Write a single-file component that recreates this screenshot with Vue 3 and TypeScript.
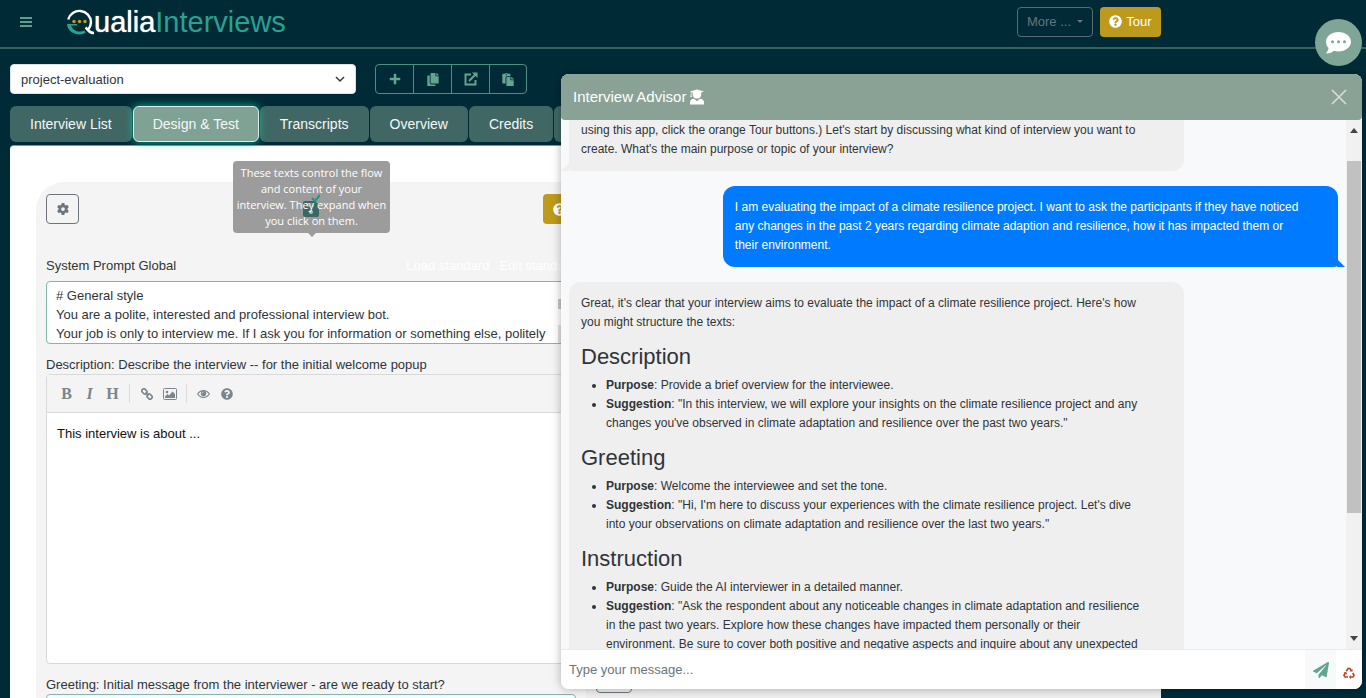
<script setup lang="ts">
import { ref } from 'vue'

interface Section {
  title: string
  purpose: string
  suggestion: string
}

const project = ref('project-evaluation')
const tabs: string[] = ['Interview List', 'Design & Test', 'Transcripts', 'Overview', 'Credits', '']
const activeTab = ref('Design & Test')
const systemPrompt = ref(
  '# General style\nYou are a polite, interested and professional interview bot.\nYour job is only to interview me. If I ask you for information or something else, politely',
)
const description = ref('This interview is about ...')
const greeting = ref('')
const message = ref('')

const sections: Section[] = [
  {
    title: 'Description',
    purpose: 'Provide a brief overview for the interviewee.',
    suggestion:
      '"In this interview, we will explore your insights on the climate resilience project and any changes you\'ve observed in climate adaptation and resilience over the past two years."',
  },
  {
    title: 'Greeting',
    purpose: 'Welcome the interviewee and set the tone.',
    suggestion:
      '"Hi, I\'m here to discuss your experiences with the climate resilience project. Let\'s dive into your observations on climate adaptation and resilience over the last two years."',
  },
  {
    title: 'Instruction',
    purpose: 'Guide the AI interviewer in a detailed manner.',
    suggestion:
      '"Ask the respondent about any noticeable changes in climate adaptation and resilience in the past two years. Explore how these changes have impacted them personally or their environment. Be sure to cover both positive and negative aspects and inquire about any unexpected',
  },
]

const questionPath =
  'M504 256c0 136.997-111.043 248-248 248S8 392.997 8 256C8 119.083 119.043 8 256 8s248 111.083 248 248zM262.655 90c-54.497 0-89.255 22.957-116.549 63.758-3.536 5.286-2.353 12.415 2.715 16.258l34.699 26.31c5.205 3.947 12.621 3.008 16.665-2.122 17.864-22.658 30.113-35.797 57.303-35.797 20.429 0 45.698 13.148 45.698 32.958 0 14.976-12.363 22.667-32.534 33.976C247.128 238.528 216 254.941 216 296v4c0 6.627 5.373 12 12 12h56c6.627 0 12-5.373 12-12v-1.333c0-28.462 83.186-29.647 83.186-106.667 0-58.002-60.165-102-116.531-102zM256 338c-25.365 0-46 20.635-46 46 0 25.364 20.635 46 46 46s46-20.636 46-46c0-25.365-20.635-46-46-46z'
const gearPath =
  'M495.9 166.6c3.2 8.7 .5 18.4-6.4 24.6l-43.3 39.4c1.1 8.3 1.7 16.8 1.7 25.4s-.6 17.1-1.7 25.4l43.3 39.4c6.9 6.2 9.6 15.9 6.4 24.6c-4.4 11.9-9.7 23.3-15.8 34.3l-4.7 8.1c-6.6 11-14 21.4-22.1 31.2c-5.9 7.2-15.7 9.6-24.5 6.8l-55.7-17.7c-13.4 10.3-28.2 18.9-44 25.4l-12.5 57.1c-2 9.1-9 16.3-18.2 17.8c-13.8 2.3-28 3.5-42.5 3.5s-28.7-1.2-42.5-3.5c-9.2-1.5-16.2-8.7-18.2-17.8l-12.5-57.1c-15.8-6.5-30.6-15.1-44-25.4L83.1 425.9c-8.8 2.8-18.6 .3-24.5-6.8c-8.1-9.8-15.5-20.2-22.1-31.2l-4.7-8.1c-6.1-11-11.4-22.4-15.8-34.3c-3.2-8.7-.5-18.4 6.4-24.6l43.3-39.4C64.6 273.1 64 264.6 64 256s.6-17.1 1.7-25.4L22.4 191.2c-6.9-6.2-9.6-15.9-6.4-24.6c4.4-11.9 9.7-23.3 15.8-34.3l4.7-8.1c6.6-11 14-21.4 22.1-31.2c5.9-7.2 15.7-9.6 24.5-6.8l55.7 17.7c13.4-10.3 28.2-18.9 44-25.4l12.5-57.1c2-9.1 9-16.3 18.2-17.8C227.3 1.2 241.5 0 256 0s28.7 1.2 42.5 3.5c9.2 1.5 16.2 8.7 18.2 17.8l12.5 57.1c15.8 6.5 30.6 15.1 44 25.4l55.7-17.7c8.8-2.8 18.6-.3 24.5 6.8c8.1 9.8 15.5 20.2 22.1 31.2l4.7 8.1c6.1 11 11.4 22.4 15.8 34.3zM256 336a80 80 0 1 0 0-160 80 80 0 1 0 0 160z'
const copyPath =
  'M320 448v40c0 13.255-10.745 24-24 24H24c-13.255 0-24-10.745-24-24V120c0-13.255 10.745-24 24-24h72v296c0 30.879 25.121 56 56 56h168zm0-344V0H152c-13.255 0-24 10.745-24 24v368c0 13.255 10.745 24 24 24h272c13.255 0 24-10.745 24-24V128H344c-13.2 0-24-10.8-24-24zm120.971-31.029L375.029 7.029A24 24 0 0 0 358.059 0H352v96h96v-6.059a24 24 0 0 0-7.029-16.97z'
const pastePath =
  'M128 184c0-30.879 25.122-56 56-56h136V56c0-13.255-10.745-24-24-24h-80.61C204.306 12.89 183.637 0 160 0s-44.306 12.89-55.39 32H24C10.745 32 0 42.745 0 56v336c0 13.255 10.745 24 24 24h104V184zm32-144c13.255 0 24 10.745 24 24s-10.745 24-24 24-24-10.745-24-24 10.745-24 24-24zm184 248h104v200c0 13.255-10.745 24-24 24H184c-13.255 0-24-10.745-24-24V184c0-13.255 10.745-24 24-24h136v104c0 13.2 10.8 24 24 24zm104-38.059V256h-96v-96h6.059a24 24 0 0 1 16.97 7.029l65.941 65.941a24.002 24.002 0 0 1 7.03 16.971z'
const planePath =
  'M476 3.2L12.5 270.6c-18.1 10.4-15.8 35.6 2.2 43.2L121 358.4l287.3-253.2c5.5-4.9 13.3 2.6 8.6 8.3L176 407v80.5c0 23.6 28.5 32.9 42.5 15.8L282 426l124.6 52.2c14.2 6 30.4-2.9 33-18.2l72-432C515 7.8 493.3-6.8 476 3.2z'
</script>

<template>
  <div class="page">
    <header class="topbar">
      <div class="topbar-inner">
        <button class="burger" type="button" aria-label="Menu">
          <svg width="12" height="12" viewBox="0 0 12 12"><path d="M0 1h12v2H0zM0 5h12v2H0zM0 9h12v2H0z" fill="currentColor" /></svg>
        </button>
        <a class="logo" href="#" aria-label="Qualia Interviews">
          <svg class="logo-q" width="29" height="30" viewBox="0 0 29 30" fill="none">
            <path d="M2.200 12.500A11.600 11.600 0 0 1 25 15c0 3.400-1.300 5.800-3.400 7.800" stroke="#fff" stroke-width="2.400" />
            <path d="M19.500 20.500c2.600 2 3.500 5.600 8.500 5.500" stroke="#fff" stroke-width="2.600" />
            <path d="M1 17h10v1.500H5C6.300 22 9.300 24.600 13.500 24.600c2 0 3.500-.4 4.800-1l1.400 1.800c-1.800 1.200-3.900 2-6.200 2C6.800 27.400 1.400 23 1 17z" fill="#2aa193" />
            <circle cx="8" cy="14.500" r="1.700" fill="#c99a1c" /><circle cx="13.500" cy="14.500" r="1.700" fill="#c99a1c" /><circle cx="19" cy="14.500" r="1.700" fill="#c99a1c" />
          </svg>
          <span class="logo-a">ualia</span><span class="logo-b">Interviews</span>
        </a>
        <div class="top-actions">
          <button class="more" type="button">More ... <span class="caret"></span></button>
          <button class="tour" type="button">
            <svg width="13" height="13" viewBox="0 0 512 512" fill="currentColor"><path :d="questionPath" /></svg>
            Tour
          </button>
        </div>
      </div>
    </header>

    <div class="container">
      <div class="picker-row">
        <div class="picker">
          <select v-model="project" aria-label="Project">
            <option>project-evaluation</option>
          </select>
          <svg class="chevron" width="10" height="7" viewBox="0 0 10 7" fill="none"><path d="M1 1l4 4 4-4" stroke="#343a40" stroke-width="1.500" /></svg>
        </div>
        <div class="btn-group">
          <button type="button" aria-label="Add"><svg width="12" height="12" viewBox="0 0 12 12"><path d="M5 1h2v4h4v2H7v4H5V7H1V5h4z" fill="currentColor" stroke="currentColor" stroke-width=".5" /></svg></button>
          <button type="button" aria-label="Copy"><svg width="12" height="13" viewBox="0 0 448 512" fill="currentColor"><path :d="copyPath" /></svg></button>
          <button type="button" aria-label="Open"><svg width="14" height="14" viewBox="0 0 14 14" fill="none" stroke="currentColor" stroke-width="1.900"><path d="M7 2.500H1.500v10h10V8M5 9l7-7" /><path d="M8 .5h5.500V6z" fill="currentColor" stroke="none" /></svg></button>
          <button type="button" aria-label="Paste"><svg width="12" height="13" viewBox="0 0 448 512" fill="currentColor"><path :d="pastePath" /></svg></button>
        </div>
      </div>

      <nav class="tabs">
        <button v-for="t in tabs" :key="t" type="button" :class="{ active: t === activeTab }" @click="activeTab = t">{{ t }}</button>
      </nav>

      <main class="sheet">
        <section class="card">
          <div class="card-bar">
            <button class="outline" type="button" aria-label="Settings">
              <svg width="12" height="12" viewBox="0 0 512 512" fill="currentColor"><path :d="gearPath" /></svg>
            </button>
            <div class="save-wrap">
              <button class="save" type="button" aria-label="Save">
                <svg width="18" height="30" viewBox="0 0 18 30">
                  <path d="M3 7h10l4 4v10a2 2 0 0 1-2 2H3a2 2 0 0 1-2-2V9a2 2 0 0 1 2-2z" fill="#3b6865" />
                  <path d="M4 9h8v4H4z" fill="#75908c" />
                  <circle cx="9" cy="18" r="2" fill="#b5c0be" />
                  <path d="M10 4l3 3 5-6" fill="none" stroke="#159c83" stroke-width="2" />
                </svg>
              </button>
              <div class="tooltip" role="tooltip"><span>These texts control the flow and content of your interview. They expand when you click on them.</span></div>
            </div>
            <button class="tour" type="button" aria-label="Tour">
              <svg width="13" height="13" viewBox="0 0 512 512" fill="currentColor"><path :d="questionPath" /></svg>
            </button>
          </div>

          <div class="label-row">
            <label for="sys">System Prompt Global</label>
            <a href="#">Load standard</a>
            <a href="#">Edit standard</a>
          </div>
          <div class="prompt">
            <textarea id="sys" v-model="systemPrompt" rows="3"></textarea>
            <div class="mini-bar" aria-hidden="true"><i></i><b></b></div>
          </div>

          <label class="desc-label" for="desc">Description: Describe the interview -- for the initial welcome popup</label>
          <div class="editor">
            <div class="editor-bar">
              <button type="button" class="glyph">B</button>
              <button type="button" class="glyph slant">I</button>
              <button type="button" class="glyph">H</button>
              <span class="sep"></span>
              <button type="button" aria-label="Link">
                <svg width="12" height="12" viewBox="0 0 12 12" fill="none" stroke="currentColor" stroke-width="1.600"><rect x="-2.700" y="-2" width="5.400" height="4" rx="1.800" transform="translate(3.400 3.400) rotate(45)" /><rect x="-2.700" y="-2" width="5.400" height="4" rx="1.800" transform="translate(8.600 8.600) rotate(45)" /><path d="M4.500 4.500l3 3" /></svg>
              </button>
              <button type="button" aria-label="Image">
                <svg width="14" height="12" viewBox="0 0 14 12"><rect x=".5" y=".5" width="13" height="11" rx="1" fill="none" stroke="currentColor" /><circle cx="4" cy="4" r="1.300" fill="currentColor" /><path d="M2 10V8.500L4.500 6 6 7.500 9.500 3.500 12 6v4z" fill="currentColor" /></svg>
              </button>
              <span class="sep"></span>
              <button type="button" aria-label="Preview">
                <svg width="13" height="10" viewBox="0 0 13 10"><path d="M.6 5C3.500.5 9.500.5 12.400 5 9.500 9.500 3.500 9.500.6 5z" fill="none" stroke="currentColor" stroke-width="1.100" /><circle cx="6.500" cy="4.500" r="2.700" fill="currentColor" /><path d="M5 4.500A1.500 1.500 0 0 1 6.500 3" stroke="#f4f4f4" stroke-width=".7" fill="none" /></svg>
              </button>
              <button type="button" aria-label="Help">
                <svg width="12" height="12" viewBox="0 0 512 512" fill="currentColor"><path :d="questionPath" /></svg>
              </button>
            </div>
            <textarea id="desc" v-model="description"></textarea>
          </div>

          <label class="greet-label" for="greet">Greeting: Initial message from the interviewer - are we ready to start?</label>
          <textarea id="greet" v-model="greeting" class="greet" rows="3"></textarea>
        </section>
        <section class="card side">
          <button class="outline" type="button" aria-label="Test settings"></button>
        </section>
      </main>
    </div>

    <button class="fab" type="button" aria-label="Chat">
      <svg width="25" height="22" viewBox="0 0 25 22"><path d="M12.500 0C19.400 0 25 4.300 25 9.700s-5.600 9.700-12.500 9.700c-1.600 0-3-.2-4.400-.6C6.300 20.200 3.700 21.500.8 21.500c-.5 0-.7-.6-.3-.9 1.100-1.200 1.900-2.900 2-4.600C.9 14.200 0 12 0 9.700 0 4.300 5.600 0 12.500 0z" fill="#fff" /><circle cx="6.500" cy="9.700" r="1.500" fill="#7fa596" /><circle cx="12.500" cy="9.700" r="1.500" fill="#7fa596" /><circle cx="18.500" cy="9.700" r="1.500" fill="#7fa596" /></svg>
    </button>

    <aside class="chat">
      <div class="chat-head">
        <h1>
          Interview Advisor
          <svg width="14" height="16" viewBox="0 0 14 16" fill="#fff"><path d="M0 2.500L7 .5l7 2-2.800.9c.4 4.200-1.200 6.200-4.200 6.200S2.400 7.600 2.800 3.400L1.500 3v3l.5 2H.3L.8 6V2.800z" /><path d="M0 15.500v-2.300c0-2 1.800-3.400 4-3.500l3 2.600 3-2.600c2.200.1 4 1.500 4 3.500v2.300z" /></svg>
        </h1>
        <button type="button" aria-label="Close">
          <svg width="16" height="16" viewBox="0 0 16 16"><path d="M1 1l14 14M15 1L1 15" stroke="#d3dcd8" stroke-width="1.700" /></svg>
        </button>
      </div>
      <div class="chat-body">
        <div class="messages">
          <div class="bubble bot cut">
            <p>using this app, click the orange Tour buttons.) Let's start by discussing what kind of interview you want to create. What's the main purpose or topic of your interview?</p>
          </div>
          <div class="bubble user">
            <p>I am evaluating the impact of a climate resilience project. I want to ask the participants if they have noticed any changes in the past 2 years regarding climate adaption and resilience, how it has impacted them or their environment.</p>
          </div>
          <div class="bubble bot">
            <p>Great, it's clear that your interview aims to evaluate the impact of a climate resilience project. Here's how you might structure the texts:</p>
            <template v-for="s in sections" :key="s.title">
              <h2>{{ s.title }}</h2>
              <ul>
                <li><strong>Purpose</strong>: {{ s.purpose }}</li>
                <li><strong>Suggestion</strong>: {{ s.suggestion }}</li>
              </ul>
            </template>
          </div>
        </div>
        <div class="scrollbar" aria-hidden="true">
          <svg width="8" height="5" viewBox="0 0 8 5"><path d="M0 5l4-5 4 5z" fill="#444" /></svg>
          <div class="track"><div class="thumb"></div></div>
          <svg width="8" height="5" viewBox="0 0 8 5"><path d="M0 0l4 5 4-5z" fill="#444" /></svg>
        </div>
      </div>
      <form class="composer" @submit.prevent>
        <input v-model="message" type="text" placeholder="Type your message..." aria-label="Message" />
        <button class="send" type="submit" aria-label="Send"><svg width="16" height="16" viewBox="0 0 512 512" fill="#62a592"><path :d="planePath" /></svg></button>
        <button class="reset" type="button" aria-label="Reset">
          <svg width="12" height="12" viewBox="0 0 12 12" fill="none" stroke="#b5482a" stroke-width="1.700"><path d="M3.300 4.300L5 1.500h2l1.300 2.200" /><path d="M9.800 6l1.200 2.300-1 1.700H7" /><path d="M5 10H2L1 8.300 2.300 6" /><path d="M6.600 4.600h3V1.900zM8 7.900v4L5.900 10zM.4 5.600l3-.6.7 2.800z" fill="#b5482a" stroke="none" /></svg>
        </button>
      </form>
    </aside>
  </div>
</template>

<style>
html,
body {
  height: 100%;
  background: #002b36;
  overflow: hidden;
}
</style>

<style scoped>
* {
  box-sizing: border-box;
}
.page {
  position: relative;
  height: 100vh;
  overflow: hidden;
  background: #002b36;
  color: #2f3438;
  font-family: 'Liberation Sans', Arial, sans-serif;
  font-size: 13px;
  line-height: 19px;
}
button,
input,
select,
textarea {
  font: inherit;
  color: inherit;
  margin: 0;
}
button {
  display: flex;
  align-items: center;
  justify-content: center;
  padding: 0;
  border: 0;
  background: none;
  cursor: pointer;
}
svg {
  display: block;
  flex: none;
}
.topbar {
  height: 49px;
  border-bottom: 2px solid #35625f;
}
.topbar-inner {
  display: flex;
  align-items: center;
  max-width: 1161px;
  height: 43px;
}
.burger {
  margin-left: 20px;
  color: #5b9f8f;
}
.logo {
  display: flex;
  align-items: center;
  margin-left: 34px;
  font-size: 29px;
  line-height: 32px;
  text-decoration: none;
}
.logo-q {
  margin-right: -1px;
}
.logo-a {
  color: #fff;
  text-shadow: 0 0 1px #fff;
}
.logo-b {
  color: #2aa193;
}
.top-actions {
  display: flex;
  gap: 7px;
  margin-left: auto;
}
.more {
  gap: 6px;
  width: 76px;
  height: 30px;
  border: 1px solid #586b75;
  border-radius: 4px;
  color: #66757e;
}
.caret {
  border: 3px solid transparent;
  border-top-color: currentColor;
  border-bottom: 0;
}
.tour {
  gap: 4px;
  width: 61px;
  height: 30px;
  border-radius: 4px;
  background: #bd9a1b;
  color: #fff;
}
.container {
  max-width: 1161px;
  padding-left: 10px;
}
.picker-row {
  display: flex;
  gap: 19px;
  padding-top: 15px;
}
.picker {
  position: relative;
  width: 346px;
}
.picker select {
  width: 100%;
  height: 30px;
  padding: 0 10px;
  border: 1px solid #dee2e6;
  border-radius: 4px;
  background: #fff;
  appearance: none;
}
.chevron {
  position: absolute;
  right: 11px;
  top: 12px;
  pointer-events: none;
}
.btn-group {
  display: flex;
  border: 1px solid #4b8f82;
  border-radius: 4px;
  color: #62a592;
}
.btn-group button {
  width: 38px;
  color: inherit;
}
.btn-group button + button {
  border-left: 1px solid #4b8f82;
}
.btn-group button:first-child,
.btn-group button:last-child {
  width: 37px;
}
.tabs {
  display: flex;
  gap: 1px;
  margin-top: 12px;
}
.tabs button {
  height: 36px;
  padding: 0 20px;
  border-radius: 6px;
  background: #406764;
  color: #f4f7f7;
  font-size: 14px;
  white-space: nowrap;
}
.tabs button.active {
  position: relative;
  border: 1px solid #dfe9e5;
  padding: 0 19px;
  background: #7fa294;
  box-shadow: 0 0 8px #12b594;
}
.sheet {
  display: flex;
  margin-top: 3px;
  padding: 36px 0 0 26px;
  border-top: 1px solid #62a592;
  border-radius: 4px 4px 0 0;
  background: #fff;
}
.card {
  width: 550px;
  padding: 12px 10px;
  border-radius: 28px 0 0 0;
  background: #f4f4f4;
}
.side {
  display: flex;
  align-items: flex-end;
  flex: 1;
  border-radius: 0;
  background: #eee;
}
.side .outline {
  width: 36px;
  margin-bottom: 64px;
}
.card-bar {
  display: flex;
  justify-content: space-between;
}
.card-bar .tour {
  width: 33px;
}
.outline {
  width: 33px;
  height: 30px;
  border: 1px solid #6c757d;
  border-radius: 4px;
  color: #6c757d;
}
.save-wrap {
  position: relative;
  display: flex;
  align-items: center;
}
.save {
  position: relative;
  z-index: 2;
}
.tooltip {
  position: absolute;
  left: 50%;
  bottom: -9px;
  width: 157px;
  margin-left: -78px;
  padding: 4px 2px;
  color: #fff;
  font-family: 'Open Sans', sans-serif;
  font-size: 11px;
  line-height: 16px;
  text-align: center;
}
.tooltip::before {
  content: '';
  position: absolute;
  inset: 0;
  border-radius: 4px;
  background: #9c9c9c;
}
.tooltip::after {
  content: '';
  position: absolute;
  top: 100%;
  left: 50%;
  margin-left: -4px;
  border: 4px solid transparent;
  border-top-color: #9c9c9c;
  border-bottom: 0;
}
.tooltip span {
  position: relative;
  z-index: 3;
}
.label-row {
  display: flex;
  gap: 10px;
  margin-top: 32px;
}
.label-row label {
  flex: 1;
}
.label-row a {
  color: #fff;
  text-decoration: none;
}
.prompt {
  display: flex;
  height: 63px;
  margin-top: 6px;
  border: 1px solid #7db8a8;
  border-radius: 4px;
  background: #fff;
}
.prompt textarea {
  flex: 1;
  min-width: 0;
  padding: 4px 9px;
  border: 0;
  background: none;
  overflow: hidden;
  resize: none;
}
.mini-bar {
  display: flex;
  flex-direction: column;
  justify-content: space-between;
  width: 17px;
  padding-top: 17px;
}
.mini-bar i {
  height: 10px;
  background: #c8c8c8;
}
.mini-bar b {
  height: 18px;
  background: #e2e2e2;
}
.desc-label {
  display: block;
  margin-top: 11px;
}
.editor {
  border: 1px solid #d9d9d9;
  border-radius: 4px;
  background: #fff;
}
.editor-bar {
  display: flex;
  align-items: center;
  height: 38px;
  padding: 0 8px;
  border-bottom: 1px solid #d9d9d9;
  background: #f4f4f4;
  color: #7a858e;
}
.editor-bar button {
  width: 23px;
  height: 23px;
  color: inherit;
}
.editor-bar .glyph {
  font: bold 16px 'Liberation Serif', serif;
}
.editor-bar .slant {
  font-style: italic;
}
.sep {
  width: 1px;
  height: 19px;
  margin: 0 5px;
  background: #dcdcdc;
}
.editor textarea {
  display: block;
  width: 100%;
  height: 250px;
  padding: 11px 10px;
  border: 0;
  background: none;
  color: #111;
  resize: none;
}
.greet-label {
  display: block;
  margin-top: 11px;
}
.greet {
  display: block;
  width: 100%;
  border: 1px solid #7db8a8;
  border-radius: 4px;
  resize: none;
}
.fab {
  position: absolute;
  top: 19px;
  right: 4px;
  width: 47px;
  height: 47px;
  border-radius: 50%;
  background: #7fa596;
}
.chat {
  position: absolute;
  z-index: 10;
  top: 74px;
  right: 4px;
  bottom: 9px;
  display: flex;
  flex-direction: column;
  width: 801px;
  border-radius: 8px;
  background: #f8f9fa;
  box-shadow: 0 0 10px rgba(0, 0, 0, 0.3);
  overflow: hidden;
}
.chat-head {
  display: flex;
  align-items: center;
  justify-content: space-between;
  height: 46px;
  padding: 0 15px 1px 12px;
  border-radius: 0 0 4px 4px;
  background: #8aa296;
}
.chat-head h1 {
  display: flex;
  gap: 4px;
  align-items: center;
  margin: 0;
  color: #fff;
  font-size: 15px;
  font-weight: 400;
}
.chat-body {
  display: flex;
  flex: 1;
  min-height: 0;
}
.messages {
  flex: 1;
  min-width: 0;
  padding: 0 8px;
  overflow: hidden;
  font-size: 12px;
}
.bubble {
  position: relative;
  width: 80%;
  margin-bottom: 15px;
  padding: 12px 36px 12px 12px;
  border-radius: 12px 12px 12px 4px;
  background: #efefef;
}
.bubble::after {
  content: '';
  position: absolute;
  bottom: 0;
  border-bottom: 8px solid #efefef;
}
.bot::after {
  left: -8px;
  border-left: 8px solid transparent;
}
.bubble.cut {
  padding-top: 1px;
  border-top-left-radius: 0;
  border-top-right-radius: 0;
}
.bubble.user {
  margin-left: auto;
  border-radius: 12px 12px 4px 12px;
  background: #007bff;
  color: #fff;
}
.user::after {
  right: -7px;
  border-bottom-color: #007bff;
  border-right: 8px solid transparent;
}
.bubble p {
  margin: 0;
}
.bubble h2 {
  margin: 12px 0 6px;
  font-size: 22px;
  line-height: 26px;
  font-weight: 400;
}
.bubble ul {
  margin: 0;
  padding-left: 25px;
}
.scrollbar {
  display: flex;
  flex-direction: column;
  align-items: center;
  width: 16px;
  padding: 8px 0;
  background: #f1f1f1;
}
.track {
  flex: 1;
  align-self: stretch;
  padding: 28px 1px 0;
}
.thumb {
  height: 74%;
  background: #c1c1c1;
}
.composer {
  display: flex;
  height: 40px;
  border-top: 1px solid #e9ecef;
  background: #fff;
}
.composer input {
  flex: 1;
  min-width: 0;
  padding: 0 8px;
  border: 0;
  background: none;
  outline: 0;
}
.composer input::placeholder {
  color: #6c757d;
}
.send {
  width: 31px;
  background: #f8f9fa;
}
.reset {
  width: 26px;
  padding-top: 6px;
}
</style>
